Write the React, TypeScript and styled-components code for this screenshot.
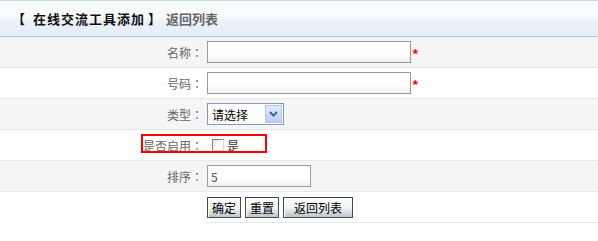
import React from "react";
import styled, { createGlobalStyle } from "styled-components";

const GlobalStyle = createGlobalStyle`
  body {
    margin: 0;
    background: #fff;
    font-family: "Noto Sans CJK SC", "Liberation Sans", sans-serif;
    font-size: 12px;
  }
`;

const Page = styled.div`
  width: 598px;
`;

const Header = styled.div`
  height: 35px;
  border-top: 1px solid #c6dcc8;
  border-bottom: 1px solid #b9c8d5;
  background: linear-gradient(
    to bottom,
    #f4f9fc 0%,
    #fafdff 40%,
    #e9f1f9 58%,
    #e5edf7 100%
  );
  display: flex;
  align-items: center;
  padding-left: 12px;
  font-size: 13px;
  font-weight: bold;
`;

const Title = styled.span`
  color: #111;
  display: flex;
  align-items: center;
`;

const TitleText = styled.span`
  letter-spacing: 1px;
  margin: 0 3px 0 8px;
`;

const BackLink = styled.a`
  color: #666;
  margin-left: 5px;
  text-decoration: none;
  cursor: pointer;
  font-size: 13px;
`;

const Row = styled.div<{ $alt?: boolean }>`
  position: relative;
  display: grid;
  grid-template-columns: 205px 1fr;
  background: ${(p) => (p.$alt ? "#f5f5f5" : "#fff")};
`;

const LabelCell = styled.div<{ $noLine?: boolean }>`
  height: 30px;
  display: flex;
  align-items: center;
  justify-content: flex-end;
  padding-right: 2px;
  color: #666;
  border-bottom: 1px solid ${(p) => (p.$noLine ? "transparent" : "#e8e8e8")};
`;

const Colon = styled.span`
  font-family: "Noto Sans CJK JP", "Noto Sans CJK SC", sans-serif;
`;

const ValueCell = styled.div`
  height: 30px;
  display: flex;
  align-items: center;
  gap: 4px;
  padding-left: 2px;
  border-bottom: 1px solid #e8e8e8;
`;

const TextInput = styled.input<{ $w: number }>`
  box-sizing: border-box;
  width: ${(p) => p.$w}px;
  height: 22px;
  margin: 0;
  padding: 0 3px;
  border: 1px solid #9a9a9a;
  background: linear-gradient(to bottom, #fff 0%, #fff 60%, #f6eef2 100%);
  color: #2f5380;
  font-family: inherit;
  font-size: 12px;
  outline: none;
`;

const Star = styled.span`
  color: #f00;
  font-size: 13px;
  font-weight: bold;
  margin-left: -3px;
  margin-top: 3px;
`;

const SelectBox = styled.div`
  box-sizing: border-box;
  width: 77px;
  height: 22px;
  border: 1px solid #7f9db9;
  background: #fff;
  display: flex;
  align-items: stretch;
  padding: 1px;
`;

const NativeSelect = styled.select`
  flex: 1;
  min-width: 0;
  appearance: none;
  border: none;
  outline: none;
  background: transparent;
  padding: 0 3px;
  font-family: inherit;
  font-size: 12px;
  color: #000;
`;

const ArrowButton = styled.span`
  box-sizing: border-box;
  width: 17px;
  border: 1px solid #b3c8ed;
  background: linear-gradient(to bottom, #e2ebfd 0%, #c8d9fa 60%, #b7cdf6 100%);
  display: flex;
  align-items: center;
  justify-content: center;
`;

const CheckLabel = styled.label`
  display: flex;
  align-items: center;
  gap: 3px;
  margin-left: 5px;
  color: #333;
`;

const CheckBox = styled.input`
  appearance: none;
  box-sizing: border-box;
  width: 12px;
  height: 12px;
  margin: 0;
  border: 1px solid #85857a;
  border-right-color: #d8d8cc;
  border-bottom-color: #d8d8cc;
  background: linear-gradient(135deg, #e6e6dc 0%, #fbfbf8 60%, #fff 100%);
`;

const Highlight = styled.div`
  position: absolute;
  left: 141px;
  top: 4px;
  width: 126px;
  height: 19px;
  box-sizing: border-box;
  border: 2px solid #f00;
  pointer-events: none;
`;

const Button = styled.button<{ $wide?: boolean }>`
  box-sizing: border-box;
  height: 21px;
  margin: 1px 0 0;
  padding: 0 ${(p) => (p.$wide ? "10px" : "4px")};
  border: 1px solid #3e4d4f;
  box-shadow: inset 1px 1px 0 #fff;
  background: linear-gradient(
    to bottom,
    #ffffff 0%,
    #f3f4f5 50%,
    #d9dde0 75%,
    #bcc3c7 100%
  );
  color: #000;
  font-family: inherit;
  font-size: 12px;
  line-height: 18px;
  cursor: pointer;
`;

const Chevron = () => (
  <svg width="9" height="6" viewBox="0 0 9 6">
    <path d="M1 1 L4.5 4.5 L8 1" fill="none" stroke="#4d6185" strokeWidth="2" />
  </svg>
);

const Label = ({ text }: { text: string }) => (
  <LabelCell>
    {text}
    <Colon>：</Colon>
  </LabelCell>
);

export default function App() {
  return (
    <Page>
      <GlobalStyle />
      <Header>
        <Title>
          【<TitleText>在线交流工具添加</TitleText>】
        </Title>
        <BackLink>返回列表</BackLink>
      </Header>

      <Row $alt>
        <Label text="名称" />
        <ValueCell>
          <TextInput $w={204} />
          <Star>*</Star>
        </ValueCell>
      </Row>

      <Row>
        <Label text="号码" />
        <ValueCell>
          <TextInput $w={204} />
          <Star>*</Star>
        </ValueCell>
      </Row>

      <Row $alt>
        <Label text="类型" />
        <ValueCell>
          <SelectBox>
            <NativeSelect defaultValue="">
              <option value="">请选择</option>
              <option value="qq">QQ</option>
              <option value="msn">MSN</option>
            </NativeSelect>
            <ArrowButton>
              <Chevron />
            </ArrowButton>
          </SelectBox>
        </ValueCell>
      </Row>

      <Row>
        <Label text="是否启用" />
        <ValueCell>
          <CheckLabel>
            <CheckBox type="checkbox" />是
          </CheckLabel>
        </ValueCell>
        <Highlight />
      </Row>

      <Row $alt>
        <Label text="排序" />
        <ValueCell>
          <TextInput $w={104} defaultValue="5" />
        </ValueCell>
      </Row>

      <Row>
        <LabelCell $noLine />
        <ValueCell>
          <Button>确定</Button>
          <Button>重置</Button>
          <Button $wide>返回列表</Button>
        </ValueCell>
      </Row>
    </Page>
  );
}
